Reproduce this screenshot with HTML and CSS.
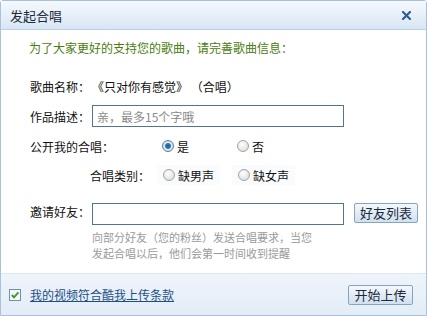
FILE: index.html
```html
<!DOCTYPE html>
<html lang="zh-CN">
<head>
    <meta charset="UTF-8">
    <title>发起合唱</title>
    <link rel="stylesheet" href="styles.css">
</head>
<body>
    <div class="dialog">
        <div class="dlg-head">
            <span class="dlg-title">发起合唱</span>
            <span class="dlg-close">
                <svg width="9" height="9" viewBox="0 0 9 9"><path d="M1 1 L8 8 M8 1 L1 8" stroke="#2f5f8f" stroke-width="2.2" stroke-linecap="square"/></svg>
            </span>
        </div>

        <div class="dlg-body">
            <p class="tip">为了大家更好的支持您的歌曲，请完善歌曲信息：</p>

            <div class="row song">
                <span class="lbl">歌曲名称：</span>
                <span class="song-name">《只对你有感觉》 （合唱）</span>
            </div>

            <div class="row field">
                <span class="lbl">作品描述：</span>
                <input class="txt" type="text" placeholder="亲，最多15个字哦">
            </div>

            <div class="row choice">
                <span class="lbl wide">公开我的合唱：</span>
                <label class="opt"><input type="radio" name="pub" checked> 是</label>
                <label class="opt"><input type="radio" name="pub"> 否</label>
            </div>

            <div class="row choice">
                <span class="lbl wide right">合唱类别：</span>
                <label class="opt shade"><input type="radio" name="kind"> 缺男声</label>
                <label class="opt shade"><input type="radio" name="kind"> 缺女声</label>
            </div>

            <div class="row field invite">
                <span class="lbl">邀请好友：</span>
                <input class="txt" type="text">
                <button class="btn">好友列表</button>
            </div>

            <p class="hint">向部分好友（您的粉丝）发送合唱要求，当您<br>发起合唱以后，他们会第一时间收到提醒</p>
        </div>

        <div class="dlg-foot">
            <span class="check">
                <svg width="12" height="12" viewBox="0 0 12 12"><rect x="0.5" y="0.5" width="11" height="11" fill="#f4f8fb" stroke="#6f8fae"/><path d="M2.8 6 L5 8.4 L9.4 3.4" fill="none" stroke="#3c9a22" stroke-width="1.9"/></svg>
            </span>
            <a class="terms" href="#">我的视频符合酷我上传条款</a>
            <button class="btn start">开始上传</button>
        </div>
    </div>
</body>
</html>
```

FILE: styles.css
```css
body {
    margin: 0;
    background: #fff;
    font-family: "Noto Sans CJK SC", "Noto Sans", sans-serif;
    font-size: 12px;
    color: #111;
}

.dialog {
    width: 427px;
    height: 316px;
    box-sizing: border-box;
    border: 1px solid #a9c2dc;
    border-radius: 3px 3px 0 0;
    display: flex;
    flex-direction: column;
    background: #fff;
}

.dlg-head {
    height: 28px;
    border-bottom: 1px solid #b9cfe5;
    background: linear-gradient(#f6f9fd, #d8e6f4);
    display: flex;
    align-items: center;
    justify-content: space-between;
    padding: 0 15px 0 9px;
}

.dlg-title {
    font-size: 13px;
    color: #1c2a3a;
}

.dlg-close {
    display: flex;
}

.dlg-body {
    flex: 1;
    padding: 8px 0 0 28px;
}

.tip {
    margin: 0;
    height: 20px;
    line-height: 20px;
    color: #4a7c10;
}

.row {
    display: flex;
    align-items: center;
    height: 20px;
    margin-top: 9px;
}

.row.song {
    margin-top: 18px;
}

.song-name {
    white-space: pre;
}

.row.field {
    height: 22px;
}

.lbl {
    width: 62px;
    flex: none;
    padding-left: 1px;
}

.lbl.wide {
    width: 126px;
    padding-left: 1px;
}

.lbl.right {
    text-align: right;
    width: 120px;
    padding-right: 7px;
}

.txt {
    width: 252px;
    height: 22px;
    box-sizing: border-box;
    margin: 0;
    border: 1px solid #4f7590;
    padding: 0 4px;
    font-family: inherit;
    font-size: 12px;
    outline: none;
}

.txt::placeholder {
    color: #8a8a8a;
}

.opt {
    width: 63px;
    height: 20px;
    margin-right: 12px;
    display: flex;
    align-items: center;
    gap: 3px;
    box-sizing: border-box;
    padding-left: 6px;
}

.opt.shade {
    background: #f9fbfd;
}

.opt input {
    appearance: none;
    width: 12px;
    height: 12px;
    margin: 0;
    border-radius: 50%;
    border: 1px solid #a3a3a3;
    background: radial-gradient(circle at 40% 35%, #ffffff, #d6d6d6);
}

.opt input:checked {
    border-color: #5b7b97;
    background: radial-gradient(circle at 50% 50%, #1b5e95 0, #2f7bb5 2.5px, #dfe9f2 3.5px, #c9d6e1 100%);
}

.row.invite {
    margin-top: 18px;
    align-items: flex-start;
}

.btn {
    height: 20px;
    padding: 0;
    border: 1px solid #88a4c0;
    border-radius: 2px;
    background: linear-gradient(#f4f8fc, #d0e0ef);
    font-family: inherit;
    font-size: 13px;
    color: #1b2b3c;
    line-height: 18px;
    white-space: nowrap;
    text-align: center;
}

.invite .btn {
    margin-left: 10px;
    width: 64px;
}

.hint {
    margin: 4px 0 0 63px;
    font-size: 11px;
    line-height: 16px;
    color: #9a9a9a;
}

.dlg-foot {
    height: 41px;
    border-top: 1px solid #dde8f3;
    background: linear-gradient(#eef4fa, #e3edf7);
    display: flex;
    align-items: center;
    padding: 0 13px 0 8px;
}

.check {
    display: flex;
    margin-right: 9px;
}

.terms {
    color: #1d4f86;
    text-decoration: underline;
}

.btn.start {
    margin-left: auto;
    width: 65px;
}
```
